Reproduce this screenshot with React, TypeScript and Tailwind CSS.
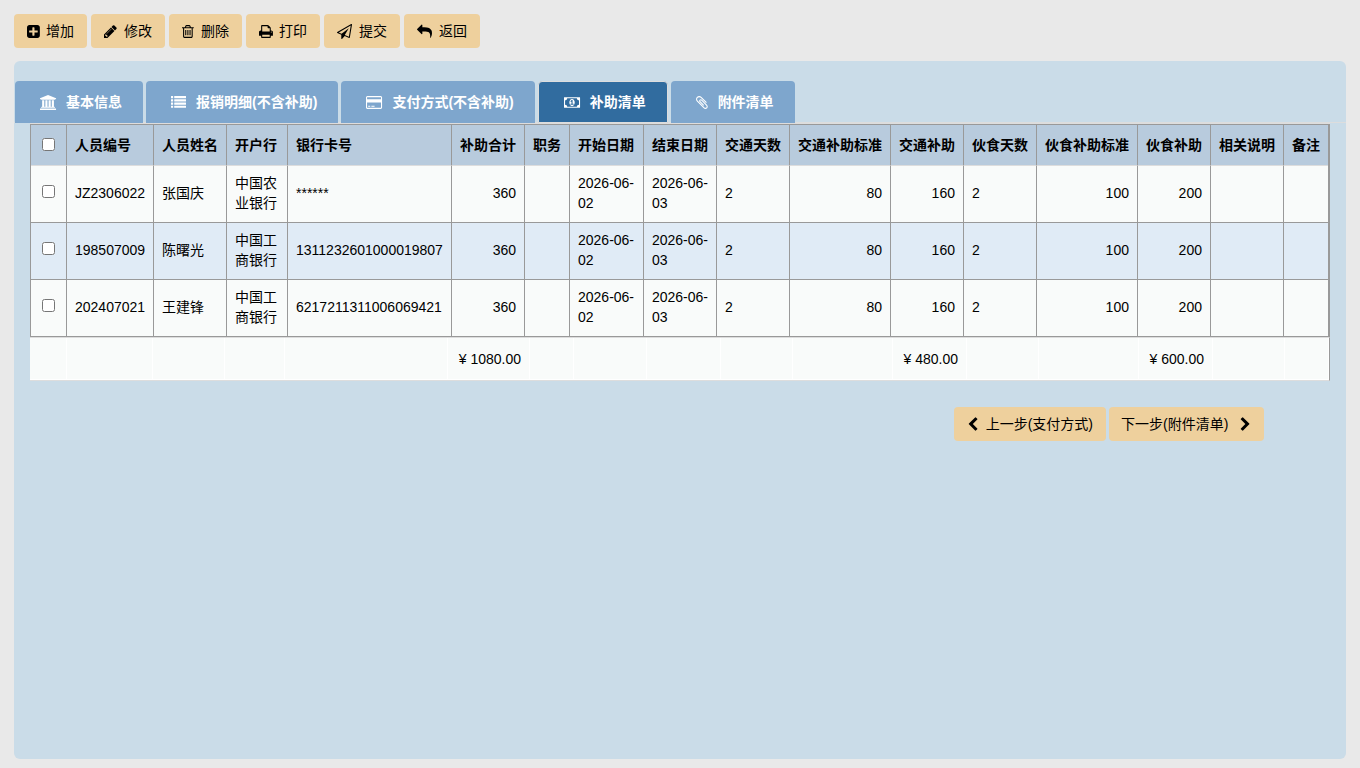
import React from "react";

const FONT = "font-['Liberation_Sans','Noto_Sans_CJK_SC',sans-serif]";

const icons = {
  plus: { w: 1536, x: 128, d: "M1408 960v-128q0-26-19-45t-45-19h-320v-320q0-26-19-45t-45-19h-128q-26 0-45 19t-19 45v320h-320q-26 0-45 19t-19 45v128q0 26 19 45t45 19h320v320q0 26 19 45t45 19h128q26 0 45-19t19-45v-320h320q26 0 45-19t19-45zm256-544v960q0 119-84.5 203.5t-203.5 84.5h-960q-119 0-203.5-84.5t-84.5-203.5v-960q0-119 84.5-203.5t203.5-84.5h960q119 0 203.5 84.5t84.5 203.5z" },
  pencil: { w: 1536, x: 128, d: "M491 1536l91-91-235-235-91 91v107h128v128h107zm523-928q0-22-22-22-10 0-17 7l-542 542q-7 7-7 17 0 22 22 22 10 0 17-7l542-542q7-7 7-17zm-54-192l416 416-832 832h-416v-416zm683 96q0 53-37 90l-166 166-416-416 166-165q36-38 90-38 53 0 91 38l235 234q37 39 37 91z" },
  trash: { w: 1408, x: 192, d: "M704 736v576q0 14-9 23t-23 9h-64q-14 0-23-9t-9-23v-576q0-14 9-23t23-9h64q14 0 23 9t9 23zm256 0v576q0 14-9 23t-23 9h-64q-14 0-23-9t-9-23v-576q0-14 9-23t23-9h64q14 0 23 9t9 23zm256 0v576q0 14-9 23t-23 9h-64q-14 0-23-9t-9-23v-576q0-14 9-23t23-9h64q14 0 23 9t9 23zm128 724v-948h-896v948q0 22 7 40.5t14.5 27 10.5 8.5h832q3 0 10.5-8.5t14.5-27 7-40.5zm-672-1076h448l-48-117q-7-9-17-11h-317q-10 2-17 11zm928 32v64q0 14-9 23t-23 9h-96v948q0 83-47 143.5t-113 60.5h-832q-66 0-113-58.5t-47-141.5v-952h-96q-14 0-23-9t-9-23v-64q0-14 9-23t23-9h309l70-167q15-37 54-63t79-26h320q40 0 79 26t54 63l70 167h309q14 0 23 9t9 23z" },
  print: { w: 1664, x: 64, d: "M448 1536h896v-256h-896v256zm0-640h896v-384h-160q-40 0-68-28t-28-68v-160h-640v640zm1152 64q0-26-19-45t-45-19-45 19-19 45 19 45 45 19 45-19 19-45zm128 0v416q0 13-9.5 22.5t-22.5 9.5h-224v160q0 40-28 68t-68 28h-960q-40 0-68-28t-28-68v-160h-224q-13 0-22.5-9.5t-9.5-22.5v-416q0-79 56.5-135.5t135.5-56.5h64v-544q0-40 28-68t68-28h672q40 0 88 20t76 48l152 152q28 28 48 76t20 88v256h64q79 0 135.5 56.5t56.5 135.5z" },
  plane: { w: 1792, x: 0, d: "M1764 11q33 24 27 64l-256 1536q-5 29-32 45-14 8-31 8-11 0-24-5l-527-215-298 327q-18 21-47 21-14 0-23-4-19-7-30-23.5t-11-36.5v-452l-472-193q-37-14-40-55-3-39 32-59l1664-960q35-21 68 2zm-342 1499l221-1323-1434 827 336 137 863-639-478 797z" },
  reply: { w: 1792, x: 0, d: "M1792 1120q0 166-127 451-3 7-10.5 24t-13.5 30-13 22q-12 17-28 17-15 0-23.5-10t-8.5-25q0-9 2.5-26.5t2.5-23.5q5-68 5-123 0-112-19.5-200.5t-54-153.5-90-112C1300 925 1130 896 864 896h-224v256q0 26-19 45t-45 19-45-19l-512-512q-19-19-19-45t19-45l512-512q19-19 45-19t45 19 19 45v256h224q713 0 875 403 53 134 53 333z" },
  left: { w: 1280, x: 320, d: "M1427 301l-531 531 531 531q19 19 19 45t-19 45l-166 166q-19 19-45 19t-45-19l-742-742q-19-19-19-45t19-45l742-742q19-19 45-19t45 19l166 166q19 19 19 45t-19 45z" },
  right: { w: 1280, x: 256, d: "M1363 877l-742 742q-19 19-45 19t-45-19l-166-166q-19-19-19-45t19-45l531-531-531-531q-19-19-19-45t19-45l166-166q19-19 45-19t45 19l742 742q19 19 19 45t-19 45z" },
  clip: { w: 1408, x: 192, d: "M1596 1385q0 117-79 196t-196 79q-135 0-235-100l-777-776q-113-115-113-271 0-159 110-270t269-111q158 0 273 113l605 606q10 10 10 22 0 16-30.5 46.5t-46.5 30.5q-13 0-23-10l-606-607q-79-77-181-77-106 0-179 75t-73 181q0 105 76 181l776 777q63 63 145 63 64 0 106-42t42-106q0-82-63-145l-581-581q-26-24-60-24-29 0-48 19t-19 48q0 32 25 59l410 410q10 10 10 22 0 16-31 47t-47 31q-12 0-22-10l-410-410q-63-61-63-149 0-82 57-139t139-57q88 0 149 63l581 581q100 98 100 235z" },
  list: { w: 1792, x: 0, d: "M30 1280h196q30 0 30 30v196q0 30-30 30H30q-30 0-30-30v-196q0-30 30-30zM30 896h196q30 0 30 30v196q0 30-30 30H30q-30 0-30-30V926q0-30 30-30zM30 512h196q30 0 30 30v196q0 30-30 30H30q-30 0-30-30V542q0-30 30-30zM30 128h196q30 0 30 30v196q0 30-30 30H30q-30 0-30-30V158q0-30 30-30zM414 1280h1348q30 0 30 30v196q0 30-30 30H414q-30 0-30-30v-196q0-30 30-30zM414 896h1348q30 0 30 30v196q0 30-30 30H414q-30 0-30-30V926q0-30 30-30zM414 512h1348q30 0 30 30v196q0 30-30 30H414q-30 0-30-30V542q0-30 30-30zM414 128h1348q30 0 30 30v196q0 30-30 30H414q-30 0-30-30V158q0-30 30-30z" },
  bank: { w: 1920, x: 0, d: "M960 0l960 384v128h-128q0 26-20.5 45t-48.5 19h-1526q-28 0-48.5-19t-20.5-45h-128v-128zm-704 640h256v768h128v-768h256v768h128v-768h256v768h128v-768h256v768h59q28 0 48.5 19t20.5 45v64h-1664v-64q0-26 20.5-45t48.5-19h59v-768zm1595 960q28 0 48.5 19t20.5 45v128h-1920v-128q0-26 20.5-45t48.5-19h1782z" },
  card: { w: 1920, x: 0, d: "M1760 128q66 0 113 47t47 113v1216q0 66-47 113t-113 47h-1600q-66 0-113-47t-47-113v-1216q0-66 47-113t113-47h1600zm-1600 128q-13 0-22.5 9.5t-9.5 22.5v224h1664v-224q0-13-9.5-22.5t-22.5-9.5h-1600zm1600 1280q13 0 22.5-9.5t9.5-22.5v-608h-1664v608q0 13 9.5 22.5t22.5 9.5h1600zm-1504-128v-128h256v128h-256zm384 0v-128h384v128h-384z" },
  money: { w: 1920, x: 0, d: "M768 1152h384v-96h-128v-448h-114l-148 137 77 80q42-37 55-57h2v288h-128v96zm512-256q0 70-21 142t-59.5 134-101.5 101-138 39-138-39-101.5-101-59.5-134-21-142 21-142 59.5-134 101.5-101 138-39 138 39 101.5 101 59.5 134 21 142zm512 256v-512q-106 0-181-75t-75-181h-1152q0 106-75 181t-181 75v512q106 0 181 75t75 181h1152q0-106 75-181t181-75zm128-832v1152q0 26-19 45t-45 19h-1792q-26 0-45-19t-19-45v-1152q0-26 19-45t45-19h1792q26 0 45 19t19 45z" },
};

type IconName = keyof typeof icons;

function Icon({ name }: { name: IconName }) {
  const { w, x, d } = icons[name];
  return (
    <svg aria-hidden="true" viewBox={`${x} 0 ${w} 1792`} className="h-[15px] w-auto shrink-0 overflow-visible" fill="currentColor">
      <path d={d} />
    </svg>
  );
}

const actions: { icon: IconName; label: string; width: string }[] = [
  { icon: "plus", label: "增加", width: "w-[73px]" },
  { icon: "pencil", label: "修改", width: "w-[74px]" },
  { icon: "trash", label: "删除", width: "w-[73px]" },
  { icon: "print", label: "打印", width: "w-[74px]" },
  { icon: "plane", label: "提交", width: "w-[76px]" },
  { icon: "reply", label: "返回", width: "w-[76px]" },
];

const tabs: { icon: IconName; label: string; active?: boolean }[] = [
  { icon: "bank", label: "基本信息" },
  { icon: "list", label: "报销明细(不含补助)" },
  { icon: "card", label: "支付方式(不含补助)" },
  { icon: "money", label: "补助清单", active: true },
  { icon: "clip", label: "附件清单" },
];

const columns = [
  { title: "人员编号", width: 87 },
  { title: "人员姓名", width: 73 },
  { title: "开户行", width: 61 },
  { title: "银行卡号", width: 164 },
  { title: "补助合计", width: 73, right: true },
  { title: "职务", width: 45 },
  { title: "开始日期", width: 74 },
  { title: "结束日期", width: 73 },
  { title: "交通天数", width: 73 },
  { title: "交通补助标准", width: 101, right: true },
  { title: "交通补助", width: 73, right: true },
  { title: "伙食天数", width: 73 },
  { title: "伙食补助标准", width: 101, right: true },
  { title: "伙食补助", width: 73, right: true },
  { title: "相关说明", width: 73 },
  { title: "备注", width: 44 },
];

const rows = [
  ["JZ2306022", "张国庆", "中国农业银行", "******", "360", "", "2026-06-02", "2026-06-03", "2", "80", "160", "2", "100", "200", "", ""],
  ["198507009", "陈曙光", "中国工商银行", "1311232601000019807", "360", "", "2026-06-02", "2026-06-03", "2", "80", "160", "2", "100", "200", "", ""],
  ["202407021", "王建锋", "中国工商银行", "6217211311006069421", "360", "", "2026-06-02", "2026-06-03", "2", "80", "160", "2", "100", "200", "", ""],
];

const totals: { width: number; text?: string }[] = [
  { width: 37 }, { width: 86 }, { width: 72 }, { width: 60 }, { width: 163 },
  { width: 82, text: "¥ 1080.00" },
  { width: 44 }, { width: 73 }, { width: 74 }, { width: 72 }, { width: 100 },
  { width: 74, text: "¥ 480.00" },
  { width: 72 }, { width: 100 },
  { width: 74, text: "¥ 600.00" },
  { width: 72 }, { width: 44 },
];

function Cols({ widths }: { widths: { width: number }[] }) {
  const total = widths.reduce((n, c) => n + c.width, 0);
  return (
    <colgroup>
      {widths.map((c, i) => (
        <col key={i} style={{ width: `${(c.width / total) * 100}%` }} />
      ))}
    </colgroup>
  );
}

const buttonStyle = "flex h-[34px] cursor-pointer items-center rounded bg-[#eed09d] text-black";

export default function App() {
  return (
    <div className={`min-h-screen bg-[#e9e9e9] px-3.5 pt-3.5 pb-[9px] text-sm leading-5 text-black ${FONT}`}>
      <div className="flex gap-1">
        {actions.map((a) => (
          <button key={a.label} type="button" className={`${buttonStyle} ${a.width} justify-between px-[13px]`}>
            <Icon name={a.icon} />
            <span>{a.label}</span>
          </button>
        ))}
      </div>

      <main className="mt-[13px] min-h-[calc(100vh-70px)] rounded-md bg-[#cadce8] pt-5">
        <div role="tablist" className="flex h-[42px] gap-[3px] border-b border-[#dddddd] pl-px">
          {tabs.map((t) => (
            <button
              key={t.label}
              type="button"
              role="tab"
              aria-selected={!!t.active}
              className={`flex h-[42px] cursor-pointer items-center gap-2.5 rounded-t pr-[21px] pl-[25px] font-bold text-white ${
                t.active ? "border border-[#dddddd] bg-[#316c9f]" : "bg-[#7ea6cd]"
              }`}
            >
              <Icon name={t.icon} />
              <span>{t.label}</span>
            </button>
          ))}
        </div>

        <div className="mx-4 border-t border-[#dddddd]">
          <table className="w-full table-fixed border-separate border-spacing-0 border-t border-r-2 border-l border-[#999999]">
            <Cols widths={[{ width: 36 }, ...columns]} />
            <thead>
              <tr className="h-[41px] bg-[#b8cbdd]">
                <th className="border-r border-b border-r-[#999999] border-b-[#dddddd] p-0 pb-1">
                  <input type="checkbox" aria-label="全选" className="m-0 align-middle" />
                </th>
                {columns.map((c, i) => (
                  <th
                    key={c.title}
                    className={`border-b border-b-[#dddddd] px-2 text-left font-bold whitespace-nowrap ${
                      i < columns.length - 1 ? "border-r border-r-[#999999]" : ""
                    }`}
                  >
                    {c.title}
                  </th>
                ))}
              </tr>
            </thead>
            <tbody>
              {rows.map((r, n) => (
                <tr key={r[0]} className={`h-[57px] ${n % 2 ? "bg-[#e0ebf6]" : "bg-[#f9fbfa]"}`}>
                  <td className="border-r border-b border-[#999999] p-0 pb-2 text-center">
                    <input type="checkbox" aria-label={`选择 ${r[1]}`} className="m-0 align-middle" />
                  </td>
                  {r.map((v, i) => (
                    <td
                      key={i}
                      className={`border-b border-[#999999] pt-[7px] pb-[9px] pl-2 ${
                        columns[i].right ? "pr-2 text-right" : "pr-1"
                      } ${i < columns.length - 1 ? "border-r" : ""}`}
                    >
                      {v}
                    </td>
                  ))}
                </tr>
              ))}
            </tbody>
          </table>
          <table className="w-full table-fixed border-separate border-spacing-0 border-t border-r border-b border-t-[#dddddd] border-r-[#999999] border-b-[#dddddd]">
            <Cols widths={totals} />
            <tbody>
              <tr className="h-[42px] bg-[#f9fbfa]">
                {totals.map((t, i) => (
                  <td key={i} className="border-r border-b border-white px-2 text-right whitespace-nowrap">
                    {t.text}
                  </td>
                ))}
              </tr>
            </tbody>
          </table>
        </div>

        <div className="mt-[26px] mr-[82px] flex justify-end gap-[3px]">
          <button type="button" className={`${buttonStyle} gap-[7px] pr-[13px] pl-3.5`}>
            <Icon name="left" />
            <span>上一步(支付方式)</span>
          </button>
          <button type="button" className={`${buttonStyle} gap-3 pr-[13px] pl-3`}>
            <span>下一步(附件清单)</span>
            <Icon name="right" />
          </button>
        </div>
      </main>
    </div>
  );
}
